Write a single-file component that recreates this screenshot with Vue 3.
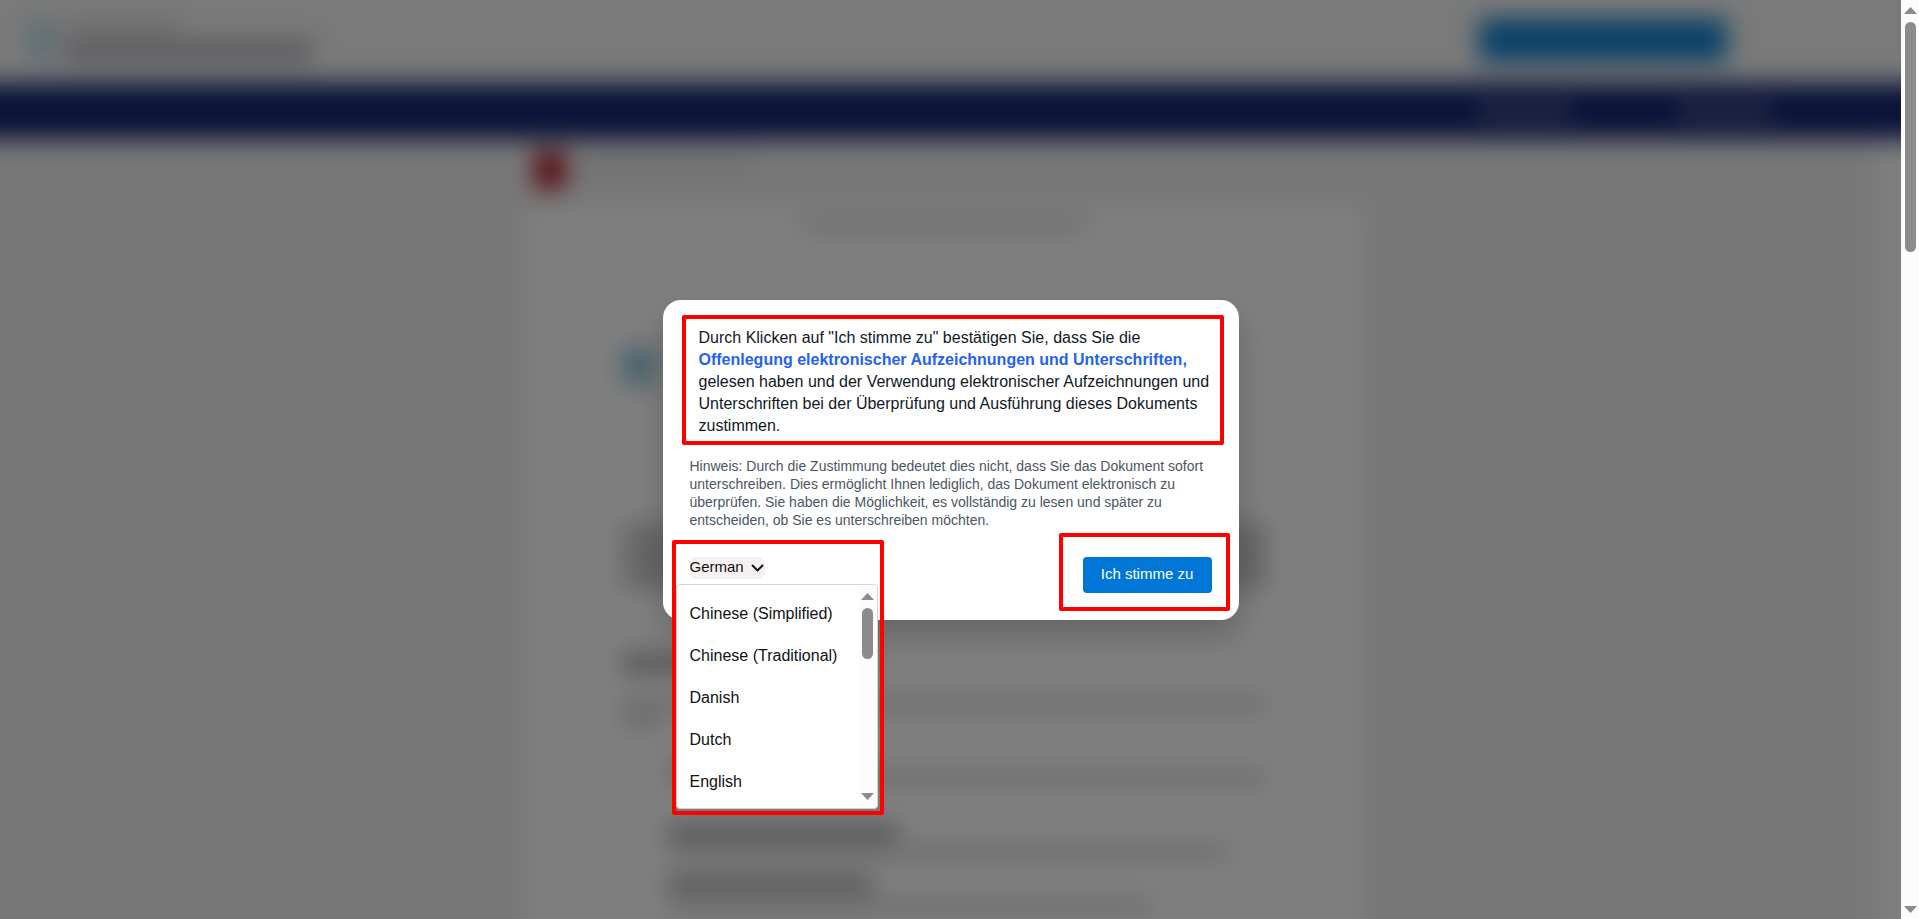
<script setup>
import { ref } from 'vue'

const languages = ['Chinese (Simplified)', 'Chinese (Traditional)', 'Danish', 'Dutch', 'English']
const selected = ref('German')
const open = ref(true)
</script>

<template>
  <div class="screen">
    <div class="viewport">
      <div class="backdrop-page" aria-hidden="true">
        <div class="site-header">
          <div class="site-logo"></div>
          <div class="site-name">
            <div class="bar name-small"></div>
            <div class="bar name-large"></div>
          </div>
          <div class="site-cta"></div>
        </div>
        <div class="site-nav">
          <div class="nav-item"></div>
          <div class="nav-item"></div>
        </div>
        <div class="site-body">
          <div class="document">
            <div class="doc-head">
              <div class="doc-icon"></div>
              <div class="bar doc-name"></div>
            </div>
            <div class="paper">
              <div class="bar envelope"></div>
              <div class="paper-logo"></div>
              <div class="block intro"></div>
              <div class="bar strong heading"></div>
              <div class="bar line"></div>
              <div class="bar line short"></div>
              <div class="bar item first"></div>
              <div class="bar item second"></div>
              <div class="bar strong term"></div>
              <div class="bar item third"></div>
              <div class="bar strong term narrow"></div>
              <div class="bar item fourth"></div>
            </div>
          </div>
          <div class="side-panel"></div>
        </div>
      </div>

      <div class="overlay">
        <section class="modal" role="dialog" aria-modal="true" aria-label="Ich stimme zu">
          <p class="agreement">
            Durch Klicken auf "Ich stimme zu" bestätigen Sie, dass Sie die
            <a href="#">Offenlegung elektronischer Aufzeichnungen und Unterschriften,</a>
            gelesen haben und der Verwendung elektronischer Aufzeichnungen und Unterschriften bei der
            Überprüfung und Ausführung dieses Dokuments zustimmen.
          </p>
          <p class="note">
            Hinweis: Durch die Zustimmung bedeutet dies nicht, dass Sie das Dokument sofort
            unterschreiben. Dies ermöglicht Ihnen lediglich, das Dokument elektronisch zu überprüfen.
            Sie haben die Möglichkeit, es vollständig zu lesen und später zu entscheiden, ob Sie es
            unterschreiben möchten.
          </p>
          <div class="actions">
            <div class="language">
              <button type="button" class="language-toggle" aria-haspopup="listbox" :aria-expanded="open" @click="open = !open">
                {{ selected }}
                <svg width="13" height="8" viewBox="0 0 13 8" aria-hidden="true">
                  <path d="M1.500 1.500 6.500 6.500l5-5" fill="none" stroke="#111" stroke-width="1.800" stroke-linecap="round" stroke-linejoin="round" />
                </svg>
              </button>
              <div v-if="open" class="menu">
                <ul role="listbox" aria-label="Language">
                  <li v-for="name in languages" :key="name" role="option" :aria-selected="name === selected" @click="selected = name">
                    {{ name }}
                  </li>
                </ul>
                <div class="scrollbar menu-scrollbar" aria-hidden="true">
                  <svg width="13" height="7" viewBox="0 0 13 7"><path d="M6.500 0 13 7H0z" fill="#8b8b8b" /></svg>
                  <div class="thumb"></div>
                  <svg class="down" width="13" height="7" viewBox="0 0 13 7"><path d="M0 0h13L6.500 7z" fill="#8b8b8b" /></svg>
                </div>
              </div>
            </div>
            <button type="button" class="agree">Ich stimme zu</button>
          </div>
          <div class="mark mark-text"></div>
          <div class="mark mark-language"></div>
          <div class="mark mark-agree"></div>
        </section>
      </div>
    </div>
    <div class="scrollbar page-scrollbar" aria-hidden="true">
      <svg width="13" height="7" viewBox="0 0 13 7"><path d="M6.500 0 13 7H0z" fill="#8b8b8b" /></svg>
      <div class="thumb"></div>
      <svg class="down" width="13" height="7" viewBox="0 0 13 7"><path d="M0 0h13L6.500 7z" fill="#8b8b8b" /></svg>
    </div>
  </div>
</template>

<style>
body {
  margin: 0;
}
</style>

<style scoped>
* {
  box-sizing: border-box;
}

.screen {
  display: flex;
  height: 100vh;
  font-family: "Liberation Sans", Arial, sans-serif;
}

.viewport {
  position: relative;
  flex: 1;
  overflow: hidden;
}

/* Bleeds 40px past every edge so the blur stays even at the borders. */
.backdrop-page {
  position: absolute;
  inset: -40px;
  display: flex;
  flex-direction: column;
  background: #f0f0f0;
  filter: blur(12px);
}

.site-header {
  display: flex;
  flex: none;
  align-items: center;
  height: 123px;
  padding: 40px 214px 4px 68px;
  background: #f4f4f4;
}

.site-logo {
  width: 26px;
  height: 40px;
  margin-right: 10px;
  background: #b8dce8;
}

.site-name {
  display: flex;
  flex: 1;
  flex-direction: column;
  gap: 8px;
}

.bar {
  flex: none;
  height: 14px;
  background: #d6d6d6;
}

.name-small {
  width: 114px;
  background: #d6d6d9;
}

.name-large {
  width: 248px;
  height: 20px;
  background: #b0b1b8;
}

.site-cta {
  width: 248px;
  height: 44px;
  border-radius: 4px;
  background: #1484d0;
}

.site-nav {
  display: flex;
  flex: none;
  gap: 104px;
  align-items: center;
  justify-content: flex-end;
  height: 56px;
  padding-right: 168px;
  background: #142672;
}

.nav-item {
  width: 96px;
  height: 16px;
  background: #505a90;
}

.site-body {
  display: flex;
  flex: 1;
  justify-content: center;
  min-height: 0;
  padding-left: 52px;
}

.document {
  display: flex;
  flex-direction: column;
  width: 834px;
  margin: 0 auto;
}

.doc-head {
  display: flex;
  flex: none;
  gap: 16px;
  align-items: flex-start;
  height: 68px;
  padding: 12px 6px 0;
}

.doc-icon {
  width: 32px;
  height: 38px;
  background: #b0202c;
}

.doc-name {
  width: 172px;
  height: 12px;
  margin-top: 6px;
}

.paper {
  display: flex;
  flex: 1;
  flex-direction: column;
  padding: 12px 96px 0 94px;
  overflow: hidden;
  background: #fff;
}

.envelope {
  align-self: center;
  width: 288px;
  height: 12px;
}

.paper-logo {
  flex: none;
  width: 32px;
  height: 38px;
  margin-top: 116px;
  background: #8fc4d8;
}

.block {
  flex: none;
  height: 66px;
  margin-top: 138px;
  background: #cecece;
}

.strong {
  background: #999;
}

.heading {
  width: 250px;
  height: 16px;
  margin-top: 66px;
}

.line {
  margin-top: 26px;
}

.line.short {
  width: 40px;
  margin-top: 4px;
}

.item {
  margin-left: 46px;
}

.first {
  width: 200px;
  margin-top: 28px;
}

.term {
  width: 230px;
  margin-left: 46px;
  margin-top: 40px;
}

.term.narrow {
  width: 204px;
  margin-top: 18px;
}

.third {
  width: 560px;
  margin-top: 6px;
}

.fourth {
  width: 484px;
  margin-top: 8px;
}

.side-panel {
  width: 64px;
  background: #fff;
}

.overlay {
  position: absolute;
  inset: 0;
  display: flex;
  align-items: center;
  justify-content: center;
  background: rgba(0, 0, 0, 0.5);
}

.modal {
  position: relative;
  width: 576px;
  padding: 27px;
  border-radius: 18px;
  background: #fff;
  box-shadow: 0 16px 32px rgba(0, 0, 0, 0.2);
}

.agreement {
  margin: 0 0 20px;
  padding-left: 9px;
  color: #111827;
  font-size: 16px;
  line-height: 22px;
}

.agreement a {
  color: #2563eb;
  font-weight: 700;
  text-decoration: none;
}

.note {
  margin: 0 0 28px;
  color: #4b5563;
  font-size: 14px;
  line-height: 18px;
}

.actions {
  display: flex;
  align-items: flex-start;
  justify-content: space-between;
}

.language {
  position: relative;
}

button {
  border: 0;
  font-family: inherit;
  font-size: 15px;
  cursor: pointer;
}

.language-toggle {
  display: flex;
  gap: 7px;
  align-items: center;
  height: 22px;
  padding: 0 1px 2px 0;
  border-radius: 6px;
  background: #f5f1f1;
  color: #111;
}

.language-toggle svg {
  margin-top: 2px;
}

.agree {
  width: 129px;
  height: 36px;
  padding: 0 0 2px;
  border-radius: 4px;
  background: #0076d6;
  color: #fff;
}

.menu {
  position: absolute;
  top: 27px;
  left: -14px;
  display: flex;
  width: 202px;
  height: 225px;
  overflow: hidden;
  border: 1px solid #d4d4d4;
  border-radius: 4px;
  background: #fff;
}

.menu ul {
  flex: 1;
  margin: 0;
  padding: 8px 0 0 13px;
  list-style: none;
}

.menu li {
  color: #111;
  font-size: 16px;
  line-height: 42px;
  white-space: nowrap;
}

.scrollbar {
  display: flex;
  flex: none;
  flex-direction: column;
  align-items: center;
  background: #fcfcfc;
}

.thumb {
  width: 11px;
  margin-top: 8px;
  border-radius: 6px;
  background: #8b8b8b;
}

.down {
  margin-top: auto;
}

.menu-scrollbar {
  width: 18px;
  padding: 8px 0;
}

.menu-scrollbar .thumb {
  height: 51px;
}

.page-scrollbar {
  width: 18px;
  padding: 7px 0 6px;
}

.page-scrollbar .thumb {
  height: 230px;
}

.mark {
  position: absolute;
  border: 4px solid #f00;
  border-radius: 2px;
  pointer-events: none;
}

.mark-text {
  top: 15px;
  right: 15px;
  left: 19px;
  height: 130px;
}

.mark-language {
  top: 240px;
  left: 9px;
  width: 212px;
  height: 275px;
}

.mark-agree {
  right: 9px;
  bottom: 9px;
  width: 171px;
  height: 78px;
}
</style>
